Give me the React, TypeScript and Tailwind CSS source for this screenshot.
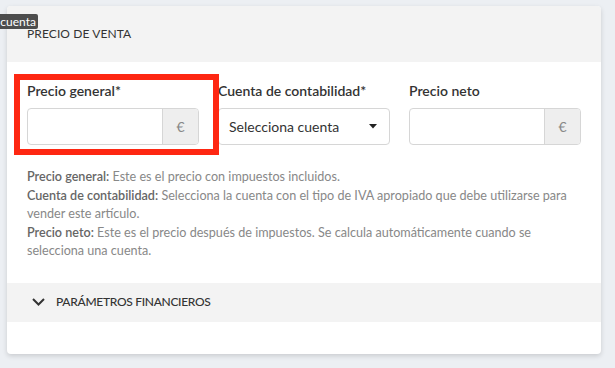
import React from "react";

const font = { fontFamily: 'Lato, "Open Sans", sans-serif' };

function AddonInput() {
  return (
    <div className="flex h-[37px] rounded-[4px] border border-[#d6d6d6] overflow-hidden bg-white">
      <div className="flex-1" />
      <div className="w-[36px] bg-[#eeeeee] border-l border-[#d6d6d6] flex items-center justify-center text-[14px] text-[#888]">
        €
      </div>
    </div>
  );
}

export default function App() {
  return (
    <div className="w-[615px] h-[368px] bg-[#eceff3] relative overflow-hidden" style={font}>
      <div className="absolute left-[7px] top-[6px] w-[594px] bg-white rounded-[4px] shadow-[0_2px_5px_rgba(0,0,0,0.15)]">
        <div className="h-[56px] bg-[#f3f3f3] px-[20px] flex items-center rounded-t-[4px] text-[12px] text-[#333] tracking-[0.1px]">
          PRECIO DE VENTA
        </div>
        <div className="relative pt-[20px] px-[20px]">
          <div className="grid grid-cols-[172px_172px_172px] gap-x-[19px]">
            <div className="flex flex-col gap-[9px]">
              <div className="text-[14px] leading-[17px] font-semibold text-[#333]">Precio general*</div>
              <AddonInput />
            </div>
            <div className="flex flex-col gap-[9px]">
              <div className="text-[14px] leading-[17px] font-semibold text-[#333] whitespace-nowrap">Cuenta de contabilidad*</div>
              <div className="flex h-[37px] items-center rounded-[4px] border border-[#d6d6d6] bg-white pl-[10px] pr-[12px] justify-between">
                <span className="text-[14px] text-[#333]">Selecciona cuenta</span>
                <svg width="8" height="5" viewBox="0 0 8 5">
                  <path d="M0 0 L8 0 L4 4.5 Z" fill="#222" />
                </svg>
              </div>
            </div>
            <div className="flex flex-col gap-[9px]">
              <div className="text-[14px] leading-[17px] font-semibold text-[#333]">Precio neto</div>
              <AddonInput />
            </div>
          </div>
          <div className="mt-[23px] text-[12.6px] leading-[18.5px] text-[#888]">
            <div>
              <span className="font-semibold text-[#666]">Precio general:</span> Este es el precio con impuestos incluidos.
            </div>
            <div>
              <span className="font-semibold text-[#666]">Cuenta de contabilidad:</span> Selecciona la cuenta con el tipo de IVA apropiado que debe utilizarse para vender este artículo.
            </div>
            <div>
              <span className="font-semibold text-[#666]">Precio neto:</span> Este es el precio después de impuestos. Se calcula automáticamente cuando se selecciona una cuenta.
            </div>
          </div>
          <div className="absolute left-[7px] top-[12px] w-[205px] h-[81px] border-[6px] border-[#fe2712]" />
        </div>
        <div className="mt-[22px] h-[39px] bg-[#f3f3f3] flex items-center pl-[25px] gap-[11px]">
          <svg width="13" height="8" viewBox="0 0 13 8">
            <path d="M1 1 L6.5 6.5 L12 1" fill="none" stroke="#333" strokeWidth="2" />
          </svg>
          <span className="text-[12px] text-[#333] font-medium tracking-[-0.3px]">PARÁMETROS FINANCIEROS</span>
        </div>
        <div className="h-[32px]" />
      </div>
      <div className="absolute left-0 top-[14px] w-[38px] h-[15px] bg-[#4d4d4d] text-white text-[12px] leading-[15px] overflow-hidden flex justify-end pr-[2px] rounded-r-[2px]">
        cuenta
      </div>
    </div>
  );
}
